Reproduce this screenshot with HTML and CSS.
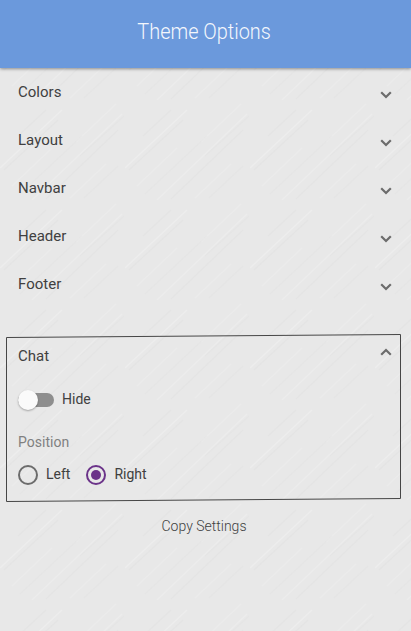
FILE: index.html
```html
<!DOCTYPE html>
<html lang="en">
<head>
<meta charset="utf-8">
<title>Theme Options</title>
<link rel="stylesheet" href="styles.css">
</head>
<body>
<svg class="texture" aria-hidden="true">
  <defs>
    <pattern id="streaks" width="125" height="100" patternUnits="userSpaceOnUse">
      <g fill="none" stroke="#fff" stroke-width="1.4">
        <path opacity=".2" d="M0 68L62 10M0 168L62 110"/>
        <path opacity=".16" d="M32 100L122 14"/>
        <path opacity=".12" d="M12 86L52 48M76 42L116 4M70 98L106 64"/>
      </g>
      <g fill="none" stroke="#999" stroke-width="1.4">
        <path opacity=".05" d="M4 70L58 20M46 99L118 30M18 36L46 10"/>
        <path opacity=".04" d="M20 94L82 36M80 56L124 16M84 98L118 66"/>
      </g>
    </pattern>
  </defs>
  <rect width="100%" height="100%" fill="url(#streaks)"/>
</svg>
<header class="header"><h1 class="title">Theme Options</h1></header>
<main class="options">
  <section class="row"><span>Colors</span><svg class="chevron" viewBox="0 0 12 8"><path d="M1.2 1.2L6 6L10.8 1.2"/></svg></section>
  <section class="row"><span>Layout</span><svg class="chevron" viewBox="0 0 12 8"><path d="M1.2 1.2L6 6L10.8 1.2"/></svg></section>
  <section class="row"><span>Navbar</span><svg class="chevron" viewBox="0 0 12 8"><path d="M1.2 1.2L6 6L10.8 1.2"/></svg></section>
  <section class="row"><span>Header</span><svg class="chevron" viewBox="0 0 12 8"><path d="M1.2 1.2L6 6L10.8 1.2"/></svg></section>
  <section class="row"><span>Footer</span><svg class="chevron" viewBox="0 0 12 8"><path d="M1.2 1.2L6 6L10.8 1.2"/></svg></section>
  <section class="chat">
    <svg class="frame" viewBox="0 0 395 168" aria-hidden="true"><path d="M.5 3.5L394.5 .5V164.5L.5 167.5Z"/></svg>
    <div class="row open"><span>Chat</span><svg class="chevron" viewBox="0 0 12 8"><path d="M1.2 6.8L6 2L10.8 6.8"/></svg></div>
    <div class="toggle-row"><span class="toggle"><span class="thumb"></span></span><span>Hide</span></div>
    <div class="label">Position</div>
    <div class="radios">
      <span class="radio"></span><span class="radio-text">Left</span>
      <span class="radio selected"></span><span class="radio-text">Right</span>
    </div>
  </section>
  <div class="copy">Copy Settings</div>
</main>
</body>
</html>
```
FILE: styles.css
```css
* { box-sizing: border-box; }
body {
  margin: 0;
  height: 631px;
  overflow: hidden;
  position: relative;
  background: #e8e8e8;
  color: #404040;
  font: 14px/20px Roboto, "Liberation Sans", sans-serif;
}
.texture {
  position: absolute;
  inset: 0;
  width: 100%;
  height: 100%;
}
.header {
  position: relative;
  height: 68px;
  padding-top: 18px;
  background: rgba(102, 150, 219, .97);
  box-shadow: 0 1px 3px rgba(0, 0, 0, .4);
}
.title {
  margin: 0;
  padding-right: 3px;
  color: #f4f7fc;
  text-align: center;
  font-size: 22px;
  line-height: 28px;
  font-weight: 300;
  transform: scaleX(.905);
}
.options { position: relative; }
.row {
  display: flex;
  justify-content: space-between;
  height: 48px;
  padding: 14px 19px 0 18px;
  font-size: 15px;
  letter-spacing: .02px;
}
.chevron {
  width: 12px;
  height: 8px;
  margin-top: 9px;
  fill: none;
  stroke: #6c6c6c;
  stroke-width: 2.2;
  overflow: visible;
}
.chat {
  position: relative;
  height: 168px;
  margin: 26px 10px 0 6px;
}
.frame {
  position: absolute;
  inset: 0;
  width: 395px;
  height: 168px;
  fill: none;
  stroke: #464646;
}
.row.open { height: 55px; padding: 12px 9px 0 12px; }
.open .chevron { margin-top: 2px; }
.toggle-row {
  display: flex;
  align-items: center;
  gap: 8px;
  height: 20px;
  padding-left: 12px;
}
.toggle {
  position: relative;
  width: 36px;
  height: 14px;
  margin-top: 2px;
  border-radius: 7px;
  background: #8e8e8e;
}
.thumb {
  position: absolute;
  left: 0;
  top: -3px;
  width: 20px;
  height: 20px;
  border-radius: 50%;
  background: #fafafa;
  box-shadow: 0 1px 2px rgba(0, 0, 0, .3);
}
.label {
  padding: 23px 0 0 12px;
  color: #808080;
  letter-spacing: .02px;
}
.radios {
  display: flex;
  align-items: center;
  padding: 13px 0 0 12px;
}
.radio {
  display: grid;
  place-items: center;
  width: 20px;
  height: 20px;
  border: 2px solid #6c6c6c;
  border-radius: 50%;
}
.radio-text { margin: -2px 16px 0 8px; }
.selected { border-color: #6b3389; }
.selected::after {
  content: "";
  width: 10px;
  height: 10px;
  border-radius: 50%;
  background: #6b3389;
}
.copy {
  padding: 14px 3px 0 0;
  text-align: center;
  font-weight: 300;
}
```
